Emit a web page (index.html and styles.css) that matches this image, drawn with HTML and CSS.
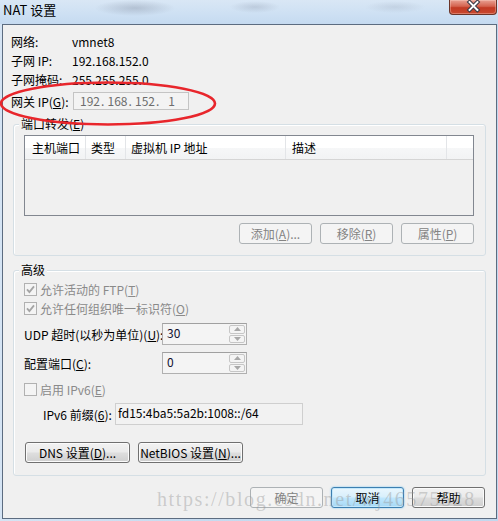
FILE: index.html
```html
<!DOCTYPE html>
<html lang="zh-CN">
<head>
<meta charset="utf-8">
<title>NAT 设置</title>
<link rel="stylesheet" href="styles.css">
</head>
<body>
<div class="window">
  <div class="titlebar">
    <span class="title">NAT 设置</span>
    <div class="close">
      <svg width="47" height="15" viewBox="0 0 47 15">
        <path d="M20 2 L28 10 M28 2 L20 10" stroke="#3d3d4a" stroke-width="4.2" stroke-linecap="square" fill="none"/>
        <path d="M20 2 L28 10 M28 2 L20 10" stroke="#ffffff" stroke-width="2" stroke-linecap="square" fill="none"/>
      </svg>
    </div>
  </div>
  <div class="client">
    <div class="info">
      <div class="row"><span class="lbl">网络:</span><span>vmnet8</span></div>
      <div class="row"><span class="lbl">子网 IP:</span><span>192.168.152.0</span></div>
      <div class="row"><span class="lbl">子网掩码:</span><span>255.255.255.0</span></div>
      <div class="row gw">
        <span class="lbl gwl">网关 IP(<u>G</u>):</span>
        <div class="ipbox"><span class="oct">192</span><span class="dot">.</span><span class="oct">168</span><span class="dot">.</span><span class="oct">152</span><span class="dot">.</span><span class="oct">1</span></div>
      </div>
    </div>

    <fieldset class="group g1">
      <legend>端口转发(<u>E</u>)</legend>
      <div class="listview">
        <div class="lv-head">
          <span class="col c1">主机端口</span>
          <span class="col c2">类型</span>
          <span class="col c3">虚拟机 IP 地址</span>
          <span class="col c4">描述</span>
          <span class="col c5"></span>
        </div>
      </div>
      <div class="btnrow">
        <span class="btn dis">添加(<u>A</u>)...</span>
        <span class="btn dis">移除(<u>R</u>)</span>
        <span class="btn dis">属性(<u>P</u>)</span>
      </div>
    </fieldset>

    <fieldset class="group g2">
      <legend>高级</legend>
      <div class="chk dis-text">
        <svg class="cb" width="13" height="13" viewBox="0 0 13 13"><rect x="0.5" y="0.5" width="12" height="12" fill="#f4f4f4" stroke="#b1b1b1"/><path d="M3 6.3 L5.4 9 L10 3.4" fill="none" stroke="#a4a4a4" stroke-width="1.8"/></svg>
        <span>允许活动的 FTP(<u>T</u>)</span>
      </div>
      <div class="chk dis-text">
        <svg class="cb" width="13" height="13" viewBox="0 0 13 13"><rect x="0.5" y="0.5" width="12" height="12" fill="#f4f4f4" stroke="#b1b1b1"/><path d="M3 6.3 L5.4 9 L10 3.4" fill="none" stroke="#a4a4a4" stroke-width="1.8"/></svg>
        <span>允许任何组织唯一标识符(<u>O</u>)</span>
      </div>
      <div class="field r-udp">
        <span class="flbl">UDP 超时(以秒为单位)(<u>U</u>):</span>
        <div class="spin">
          <span class="spin-val">30</span>
          <span class="spin-btns">
            <span class="sb"><svg width="7" height="4" viewBox="0 0 7 4"><path d="M0 4 L3.5 0 L7 4 Z" fill="#a8a8a8"/></svg></span>
            <span class="sb"><svg width="7" height="4" viewBox="0 0 7 4"><path d="M0 0 L3.5 4 L7 0 Z" fill="#a8a8a8"/></svg></span>
          </span>
        </div>
      </div>
      <div class="field r-port">
        <span class="flbl">配置端口(<u>C</u>):</span>
        <div class="spin">
          <span class="spin-val">0</span>
          <span class="spin-btns">
            <span class="sb"><svg width="7" height="4" viewBox="0 0 7 4"><path d="M0 4 L3.5 0 L7 4 Z" fill="#a8a8a8"/></svg></span>
            <span class="sb"><svg width="7" height="4" viewBox="0 0 7 4"><path d="M0 0 L3.5 4 L7 0 Z" fill="#a8a8a8"/></svg></span>
          </span>
        </div>
      </div>
      <div class="chk dis-text r-v6">
        <svg class="cb" width="13" height="13" viewBox="0 0 13 13"><rect x="0.5" y="0.5" width="12" height="12" fill="#f4f4f4" stroke="#b1b1b1"/></svg>
        <span>启用 IPv6(<u>E</u>)</span>
      </div>
      <div class="field r-prefix">
        <span class="plbl">IPv6 前缀(<u>6</u>):</span>
        <div class="prefix">fd15:4ba5:5a2b:1008::/64</div>
      </div>
      <div class="btnrow2">
        <span class="btn norm wide">DNS 设置(<u>D</u>)...</span>
        <span class="btn norm wide">NetBIOS 设置(<u>N</u>)...</span>
      </div>
    </fieldset>

    <div class="footer">
      <span class="btn dis">确定</span>
      <span class="btn focus">取消</span>
      <span class="btn norm">帮助</span>
    </div>

    <div class="watermark">https://blog.csdn.net/wj46575528</div>
  </div>

  <svg class="mark" width="224" height="50" viewBox="0 0 224 50">
    <ellipse cx="109" cy="23.5" rx="107" ry="21" fill="none" stroke="#e8262c" stroke-width="2.6"/>
  </svg>
</div>
</body>
</html>
```

FILE: styles.css
```css
* { box-sizing: border-box; }

html, body {
  margin: 0;
  padding: 0;
  background: #c9dcf0;
}

body {
  font-family: "Noto Sans CJK SC", "Noto Sans", sans-serif;
  font-size: 12px;
  color: #000;
}

u { text-decoration: underline; text-underline-offset: 1px; }

.window {
  position: relative;
  width: 498px;
  height: 521px;
  display: flex;
  flex-direction: column;
  background: linear-gradient(90deg, #d5e4f4 0%, #c6dbf0 40%, #c2d8ee 100%);
  overflow: hidden;
}

.titlebar {
  height: 24px;
  display: flex;
  align-items: flex-start;
  background:
    radial-gradient(ellipse 40px 8px at 135px 8px, rgba(120,130,150,0.35), rgba(120,130,150,0) 100%),
    radial-gradient(ellipse 25px 6px at 255px 7px, rgba(120,130,150,0.25), rgba(120,130,150,0) 100%),
    radial-gradient(ellipse 30px 6px at 395px 7px, rgba(120,130,150,0.18), rgba(120,130,150,0) 100%),
    linear-gradient(180deg, #d9e7f5 0%, #cde0f3 60%, #c5daf0 100%);
}

.title {
  padding-left: 3px;
  line-height: 20px;
  font-size: 13px;
  color: #000;
}

.close {
  margin-left: auto;
  margin-right: 1px;
  width: 48px;
  height: 15px;
  border: 1px solid #6b3428;
  border-top: none;
  border-radius: 0 0 4px 4px;
  background: linear-gradient(180deg, #e9a193 0%, #d4634f 45%, #c23a24 55%, #c9492f 100%);
  box-shadow: inset 0 0 0 1px rgba(255,220,210,0.35);
  display: flex;
}

.close svg { display: block; }

.client {
  position: relative;
  flex: 1;
  margin: 0 1px 2px 2px;
  border: 1px solid #5c6c80;
  background: #f0f0f0;
}

/* top info rows */
.info {
  padding: 7px 0 0 8px;
}

.row {
  display: flex;
  align-items: center;
  height: 19px;
  line-height: 19px;
}

.lbl { width: 61px; }

.row.gw {
  margin-top: 3px;
  height: 18px;
}

.gwl { width: 62px; }

.ipbox {
  width: 116px;
  height: 18px;
  border: 1px solid #c4c4c4;
  background: #f3f3f3;
  display: flex;
  align-items: center;
  padding-left: 6px;
  color: #6d6d6d;
  line-height: 16px;
}

.oct { width: 18px; text-align: center; flex: none; }
.dot { width: 9.5px; text-align: center; flex: none; }

/* group boxes */
.group {
  margin: 0 10px;
  padding: 0 10px;
  border: 1px solid #d5dfe5;
  border-radius: 3px;
  box-shadow: inset 1px 1px 0 #ffffff;
  min-width: 0;
}

.group legend {
  padding: 0 2px;
  margin-left: -5px;
  line-height: 16px;
  background: #f0f0f0;
}

.g1 { margin-top: 6px; padding-bottom: 11px; }

.listview {
  margin-top: 3px;
  width: 450px;
  height: 81px;
  border: 1px solid #828790;
  background: #f0f0f0;
}

.lv-head {
  display: flex;
  height: 24px;
  border-bottom: 1px solid #d5d5d5;
  background: linear-gradient(180deg, #ffffff 0%, #ffffff 50%, #f6f7f8 51%, #f2f3f4 100%);
}

.col {
  height: 23px;
  line-height: 23px;
  border-right: 1px solid #e3e5e8;
  white-space: nowrap;
}

.c1 { width: 61px; padding-left: 7px; }
.c2 { width: 40px; padding-left: 5px; }
.c3 { width: 160px; padding-left: 5px; }
.c4 { width: 161px; padding-left: 6px; }
.c5 { flex: 1; border-right: none; }

.btnrow {
  margin-top: 7px;
  display: flex;
  justify-content: flex-end;
  gap: 8px;
  padding-right: 1px;
}

.btn {
  display: flex;
  align-items: center;
  justify-content: center;
  width: 73px;
  height: 21px;
  border: 1px solid #707070;
  border-radius: 3px;
  line-height: 19px;
  white-space: nowrap;
}

.btn.dis {
  border-color: #adb2b5;
  background: #f4f4f4;
  color: #838383;
}

.btn.norm {
  background: linear-gradient(180deg, #f2f2f2 0%, #ebebeb 45%, #dddddd 55%, #cfcfcf 100%);
  box-shadow: inset 0 0 0 1px #fbfbfb;
}

.btn.focus {
  border-color: #3c7fb1;
  background: linear-gradient(180deg, #eaf6fd 0%, #d9f0fc 45%, #bee6fd 55%, #a7d9f5 100%);
  box-shadow: inset 0 0 0 1px #c4e8fb, 0 0 2px #6ec3f0;
}

.btn.wide { width: 105px; }

/* advanced group */
.g2 { margin-top: 6px; padding-bottom: 12px; }

.chk {
  display: flex;
  align-items: center;
  height: 19px;
  line-height: 19px;
  gap: 3px;
}

.g2 legend + .chk { margin-top: 2px; }

.cb { display: block; flex: none; }

.dis-text { color: #8a8a8a; }

.field {
  display: flex;
  align-items: center;
  height: 22px;
}

.r-udp { margin-top: 5px; }
.r-port { margin-top: 7px; }
.r-v6 { margin-top: 6px; }
.r-prefix { margin-top: 4px; }

.flbl { width: 138px; white-space: nowrap; }

.spin {
  width: 85px;
  height: 22px;
  border: 1px solid #b0b0b0;
  border-top-color: #a0a0a0;
  background: #f4f4f4;
  display: flex;
}

.spin-val {
  flex: 1;
  padding-left: 4px;
  line-height: 17px;
  color: #101030;
}

.spin-btns {
  width: 17px;
  display: flex;
  flex-direction: column;
  gap: 1px;
  padding: 1px 1px 1px 0;
}

.sb {
  flex: 1;
  border: 1px solid #c6c6c6;
  border-radius: 2px;
  background: #f4f4f4;
  display: flex;
  align-items: center;
  justify-content: center;
}

.sb svg { display: block; }

.plbl { width: 72px; margin-left: 19px; white-space: nowrap; }

.prefix {
  width: 188px;
  height: 22px;
  border: 1px solid #cfcfcf;
  background: #f2f2f2;
  padding-left: 2px;
  line-height: 18px;
  white-space: nowrap;
}

.btnrow2 {
  margin-top: 17px;
  margin-left: 1px;
  display: flex;
  gap: 8px;
}

/* footer */
.footer {
  margin-top: 11px;
  display: flex;
  justify-content: flex-end;
  gap: 8px;
  padding-right: 11px;
}

.watermark {
  position: absolute;
  left: 154px;
  top: 463px;
  font-family: "Liberation Serif", serif;
  font-size: 20px;
  letter-spacing: 1.6px;
  color: rgba(150, 150, 150, 0.42);
  white-space: nowrap;
  pointer-events: none;
}

.mark {
  position: absolute;
  left: -1px;
  top: 80px;
  pointer-events: none;
}
```
